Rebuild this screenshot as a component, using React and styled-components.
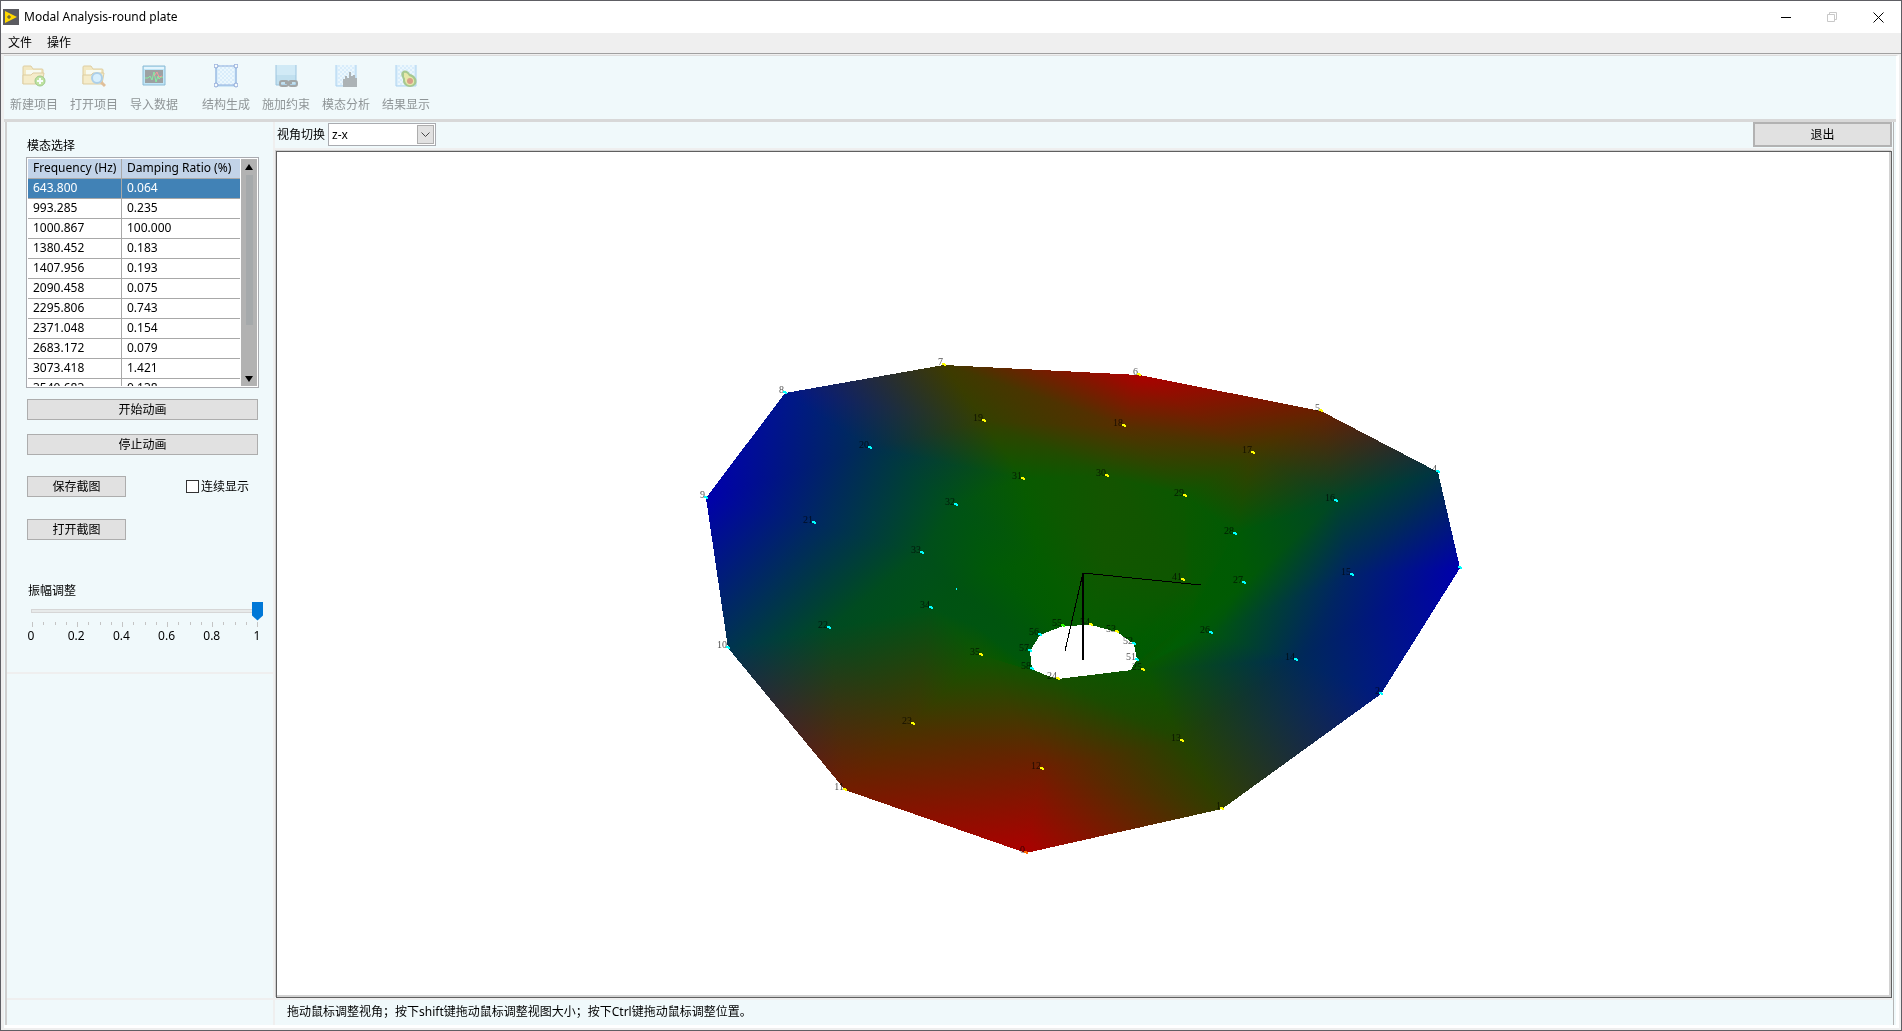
import { useState } from 'react';
import styled, { createGlobalStyle } from 'styled-components';

const GlobalStyle = createGlobalStyle`
  * {
    box-sizing: border-box;
  }
  body {
    margin: 0;
    font-family: 'Noto Sans', 'Noto Sans CJK SC', sans-serif;
    font-size: 12px;
    line-height: 16px;
    color: #000;
  }
  button, select, input {
    font: inherit;
    color: inherit;
  }
`;

// window frame
const Window = styled.div`
  height: 100vh;
  display: flex;
  flex-direction: column;
  border: 1px solid #5e5e64;
  background-color: #efefef;
`;
const TitleBar = styled.header`
  display: flex;
  align-items: center;
  height: 32px;
  padding-left: 2px;
  background-color: #fff;
`;
const Title = styled.h1`
  flex: 1;
  margin: 0 0 0 5px;
  font-size: 12px;
  font-weight: normal;
`;
const WindowButton = styled.button`
  display: flex;
  align-items: center;
  justify-content: center;
  width: 46px;
  height: 30px;
  padding: 0;
  border: none;
  background: none;
  color: ${(props) => (props.disabled ? '#c8c8c8' : '#000')};
`;
const MenuBar = styled.nav`
  display: flex;
  gap: 15px;
  height: 21px;
  padding-left: 7px;
  border-bottom: 1px solid #a0a0a0;
`;
const MenuItem = styled.button`
  padding: 0;
  border: none;
  background: none;
  line-height: 16px;
`;
const Client = styled.div`
  flex: 1;
  min-height: 0;
  display: flex;
  flex-direction: column;
  margin: 1px 2px 2px 3px;
  border-top: 1px solid #dcdcdc;
  border-right: 3px solid #fff;
  border-bottom: 3px solid #fff;
  background-color: #f0f9fb;
`;

// toolbar
const ToolBar = styled.div`
  display: flex;
  height: 66px;
  padding: 8px 0 0 6px;
  border-bottom: 3px solid #d8d8d8;
`;
const ToolButton = styled.button`
  display: flex;
  flex-direction: column;
  align-items: center;
  gap: 9px;
  width: 48px;
  margin-right: ${(props) => (props.$last ? '24px' : '12px')};
  padding: 0;
  border: none;
  background: none;
  color: #8f9597;
  svg {
    opacity: 0.5;
  }
`;

// main area
const Panels = styled.main`
  flex: 1;
  min-height: 0;
  display: flex;
  margin-left: 1px;
  border-left: 2px solid #d0d0d0;
`;
const SideColumn = styled.div`
  display: flex;
  flex-direction: column;
  width: 268px;
  border-right: 2px solid #efefef;
`;
const ControlPanel = styled.section`
  height: 552px;
  padding: 16px 9px 0 19px;
  border-bottom: 2px solid #efefef;
`;
const SideFiller = styled.div`
  flex: 1;
`;
const SideFooter = styled.div`
  height: 27px;
  border-top: 2px solid #efefef;
`;
const Caption = styled.div`
  padding-left: 1px;
`;

// mode list
const ListFrame = styled.div`
  display: flex;
  width: 233px;
  height: 231px;
  margin-top: 3px;
  padding: 1px;
  border: 1px solid #a9abb0;
  background-color: #fff;
`;
const ListClip = styled.div`
  flex: 1;
  overflow: hidden;
`;
const ModeTable = styled.table`
  width: 100%;
  table-layout: fixed;
  border-collapse: separate;
  border-spacing: 0;
  th, td {
    height: 20px;
    padding: 0 0 1px 5px;
    border-bottom: 1px solid #a8a8a8;
    line-height: 16px;
    text-align: left;
    font-weight: normal;
    white-space: nowrap;
  }
  th:first-child, td:first-child {
    width: 94px;
    border-right: 1px solid #a8a8a8;
  }
`;
const HeadRow = styled.tr`
  background-color: #c2d3e8;
`;
const ModeRow = styled.tr`
  background-color: ${(props) => (props.$selected ? '#4182b6' : '#fff')};
  color: ${(props) => (props.$selected ? '#fff' : '#000')};
`;
const ScrollBar = styled.div`
  display: flex;
  flex-direction: column;
  align-items: center;
  width: 16px;
  margin-left: 1px;
  background-color: #b2b2b2;
`;
const ScrollThumb = styled.div`
  width: 7px;
  height: 150px;
  margin-bottom: auto;
  background-color: #a5a9ab;
`;

// buttons and inputs of the side panel
const PushButton = styled.button`
  width: ${(props) => (props.$wide ? '231px' : '99px')};
  height: 21px;
  padding: 0;
  border: 1px solid #adadad;
  background-color: #e1e1e1;
  line-height: 16px;
`;
const Actions = styled.div`
  display: flex;
  flex-direction: column;
  align-items: flex-start;
  padding: 11px 0 0 1px;
`;
const ActionRow = styled.div`
  display: flex;
  align-items: center;
  width: 231px;
  margin-top: ${(props) => props.$top};
`;
const CheckLabel = styled.label`
  display: flex;
  align-items: center;
  gap: 2px;
  margin-left: 60px;
`;
const CheckBox = styled.input`
  appearance: none;
  width: 13px;
  height: 13px;
  margin: 0;
  border: 1px solid #333;
  background-color: #fff;
  &:checked {
    background-color: #0078d7;
  }
`;
const SliderBlock = styled.div`
  width: 237px;
  margin-top: 43px;
  padding-left: 1px;
`;
const SliderLabel = styled.label`
  display: block;
  padding-left: 1px;
`;
const Slider = styled.input`
  appearance: none;
  display: block;
  width: 100%;
  height: 20px;
  margin: 2px 0 0;
  background:
    linear-gradient(#e7eaea, #e7eaea) 5px 9px / calc(100% - 10px) 2px no-repeat,
    linear-gradient(#d6d6d6, #d6d6d6) 4px 8px / calc(100% - 8px) 4px no-repeat;
  &::-webkit-slider-thumb {
    appearance: none;
    width: 11px;
    height: 19px;
    background-color: #0078d7;
    clip-path: polygon(0 0, 100% 0, 100% 74%, 50% 100%, 0 74%);
  }
`;
const Ticks = styled.div`
  display: flex;
  justify-content: space-between;
  height: 6px;
  margin: 1px 5px 0;
`;
const Tick = styled.span`
  width: 1px;
  height: ${(props) => (props.$major ? '5px' : '3px')};
  background-color: #c4c4c4;
`;
const Scale = styled.div`
  display: flex;
  justify-content: space-between;
  margin: 0 -5px 0 -7px;
  span {
    width: 22px;
    text-align: center;
  }
`;

// view area
const ViewColumn = styled.div`
  flex: 1;
  min-width: 0;
  display: flex;
  flex-direction: column;
  margin-right: 2px;
  border-right: 1px solid #b4b4b4;
`;
const ViewBar = styled.div`
  display: flex;
  align-items: center;
  height: 29px;
  padding: 0 1px 1px 2px;
  border-bottom: 3px solid #efefef;
`;
const SelectWrap = styled.span`
  position: relative;
  width: 108px;
  height: 23px;
  margin-left: 3px;
`;
const ViewSelect = styled.select`
  appearance: none;
  width: 100%;
  height: 100%;
  padding: 0 20px 0 3px;
  border: 1px solid #a9abb0;
  border-radius: 0;
  background-color: #fff;
`;
const SelectArrow = styled.span`
  position: absolute;
  top: 2px;
  right: 2px;
  bottom: 2px;
  width: 17px;
  display: flex;
  align-items: center;
  justify-content: center;
  border: 1px solid #adadad;
  background-color: #e1e1e1;
  pointer-events: none;
`;
const ExitButton = styled.button`
  width: 139px;
  height: 25px;
  margin-left: auto;
  padding: 0;
  border: 2px solid #b2b2b2;
  background-color: #e1e1e1;
`;
const Viewport = styled.div`
  flex: 1;
  min-height: 0;
  margin: 0 1px;
  border: 1px solid #5f5f5f;
  box-shadow:
    -1px -1px 0 #cfcfcf,
    inset -2px -2px 0 #d2d2d2;
  background-color: #fff;
  svg {
    display: block;
    width: 100%;
    height: 100%;
  }
`;
const Mesh = styled.g`
  isolation: isolate;
  polygon {
    mix-blend-mode: lighten;
  }
`;
const StatusBar = styled.footer`
  height: 27px;
  padding: 4px 0 0 12px;
  border-top: 2px solid #efefef;
`;

const modes = [
  ['643.800', '0.064'],
  ['993.285', '0.235'],
  ['1000.867', '100.000'],
  ['1380.452', '0.183'],
  ['1407.956', '0.193'],
  ['2090.458', '0.075'],
  ['2295.806', '0.743'],
  ['2371.048', '0.154'],
  ['2683.172', '0.079'],
  ['3073.418', '1.421'],
  ['3540.683', '0.138'],
];

// plate nodes, twelve per ring, outer ring first: x, y, r, g, b
const nodes = [
  [1026, 853, 172, 0, 0],
  [1222, 809, 48, 62, 0],
  [1381, 694, 0, 25, 130],
  [1460, 568, 0, 0, 172],
  [1438, 472, 0, 52, 66],
  [1321, 411, 105, 32, 0],
  [1139, 375, 172, 0, 0],
  [944, 365, 62, 58, 0],
  [785, 393, 0, 22, 140],
  [706, 498, 0, 0, 172],
  [728, 648, 0, 52, 80],
  [845, 790, 115, 28, 0],

  [1042, 769, 112, 30, 0],
  [1182, 741, 35, 68, 0],
  [1296, 660, 0, 42, 86],
  [1352, 575, 0, 34, 106],
  [1336, 501, 0, 70, 38],
  [1253, 453, 62, 58, 0],
  [1124, 426, 88, 46, 0],
  [984, 421, 52, 64, 0],
  [870, 448, 0, 46, 82],
  [814, 523, 0, 40, 98],
  [829, 628, 0, 74, 34],
  [913, 724, 70, 52, 0],

  [1058, 679, 22, 80, 0],
  [1143, 670, 8, 86, 0],
  [1211, 633, 0, 86, 12],
  [1244, 583, 0, 90, 4],
  [1235, 534, 0, 90, 4],
  [1185, 496, 10, 88, 0],
  [1107, 476, 20, 84, 0],
  [1023, 479, 8, 90, 0],
  [956, 505, 0, 82, 22],
  [922, 553, 0, 78, 28],
  [931, 608, 0, 82, 20],
  [981, 655, 14, 86, 0],

  [1058, 679, 18, 82, 0],
  [1140, 669, 8, 86, 0],
  [1170, 650, 0, 92, 4],
  [1190, 620, 0, 92, 0],
  [1195, 595, 6, 90, 0],
  [1183, 580, 14, 86, 0],
  [1105, 560, 18, 86, 0],
  [1040, 560, 4, 92, 0],
  [995, 570, 0, 90, 6],
  [956, 589, 0, 82, 18],
  [975, 625, 0, 84, 16],
  [1010, 664, 6, 88, 0],

  [1058, 679, 18, 82, 0],
  [1129, 672, 8, 86, 0],
  [1130, 671, 8, 86, 0],
  [1137, 660, 0, 90, 2],
  [1134, 644, 0, 92, 0],
  [1117, 632, 4, 92, 0],
  [1091, 625, 6, 92, 0],
  [1063, 626, 2, 92, 0],
  [1040, 635, 0, 88, 8],
  [1030, 651, 0, 86, 12],
  [1032, 669, 0, 88, 8],
  [1045, 675, 8, 86, 0],
];

// each cell between two rings is cut into two triangles
const triangles = [];
for (let ring = 0; ring < 4; ring++) {
  for (let i = 0; i < 12; i++) {
    const a = nodes[ring * 12 + i];
    const b = nodes[ring * 12 + ((i + 1) % 12)];
    const c = nodes[(ring + 1) * 12 + ((i + 1) % 12)];
    const d = nodes[(ring + 1) * 12 + i];
    triangles.push([a, b, d], [b, c, d]);
  }
}

const YELLOW = '#ffff00';
const CYAN = '#00ffff';
const yellowNodes = [1, 5, 6, 7, 11, 12, 13, 17, 18, 19, 23, 24, 25, 29, 30, 31, 35, 41, 53, 54];
const hiddenNodes = [36, 37, 38, 39, 40, 42, 43, 44, 45, 46, 47, 48, 49, 50, 59];
const hiddenLabels = [3];

const markerColor = (index) => {
  if (index === 0) return '#ff6a00';
  if (index === 55) return '#2cff00';
  return yellowNodes.includes(index) ? YELLOW : CYAN;
};

// colour of one channel as a linear gradient over the triangle
const channelGradient = (points, channel) => {
  const [a, b, c] = points;
  const k = channel + 2;
  const det = (b[0] - a[0]) * (c[1] - a[1]) - (c[0] - a[0]) * (b[1] - a[1]);
  const values = points.map((p) => p[k]);
  const min = Math.min(...values);
  const max = Math.max(...values);
  if (det === 0 || max === 0) return null;
  if (min === max) return { min, max };
  const gx = ((b[k] - a[k]) * (c[1] - a[1]) - (c[k] - a[k]) * (b[1] - a[1])) / det;
  const gy = ((c[k] - a[k]) * (b[0] - a[0]) - (b[k] - a[k]) * (c[0] - a[0])) / det;
  const length = (max - min) / (gx * gx + gy * gy);
  const start = points.find((p) => p[k] === min);
  return {
    min,
    max,
    x1: start[0],
    y1: start[1],
    x2: start[0] + gx * length,
    y2: start[1] + gy * length,
  };
};

const channelColor = (channel, value) => {
  const rgb = [0, 0, 0];
  rgb[channel] = value;
  return `rgb(${rgb.join(',')})`;
};

function Triangle({ points, id }) {
  const shape = points.map((p) => `${p[0]},${p[1]}`).join(' ');
  return [0, 1, 2].map((channel) => {
    const g = channelGradient(points, channel);
    if (!g) return null;
    const key = `${id}-${channel}`;
    if (g.min === g.max) {
      return <polygon key={key} points={shape} fill={channelColor(channel, g.max)} />;
    }
    return [
      <linearGradient
        key={`${key}-fill`}
        id={key}
        gradientUnits="userSpaceOnUse"
        x1={g.x1}
        y1={g.y1}
        x2={g.x2}
        y2={g.y2}
      >
        <stop offset="0" stopColor={channelColor(channel, g.min)} />
        <stop offset="1" stopColor={channelColor(channel, g.max)} />
      </linearGradient>,
      <polygon key={key} points={shape} fill={`url(#${key})`} />,
    ];
  });
}

function Plate() {
  return (
    <svg viewBox="277 152 1614 845" role="img" aria-label="round plate">
      <Mesh shapeRendering="crispEdges">
        {triangles.map((points, index) => (
          <Triangle key={index} id={`t${index}`} points={points} />
        ))}
      </Mesh>
      <g fontFamily="'Liberation Serif', serif" fontSize="10" textAnchor="end" fillOpacity="0.7">
        {nodes.map(([x, y], index) =>
          hiddenNodes.includes(index) || hiddenLabels.includes(index) ? null : (
            <text key={index} x={x - 1} y={y}>
              {index}
            </text>
          )
        )}
      </g>
      <g shapeRendering="crispEdges">
        {nodes.map(([x, y], index) =>
          hiddenNodes.includes(index) ? null : (
            <path
              key={index}
              d={`M${x - 2} ${y - 2}h3v1h1v2h-2v-1h-2z`}
              fill={markerColor(index)}
            />
          )
        )}
        <path d="M956 588h1v2h-1z" fill={CYAN} />
      </g>
      <g fill="none" stroke="#000" shapeRendering="crispEdges">
        <path d="M1083 573L1201 585" />
        <path d="M1083 573V660" strokeWidth="2" />
        <path d="M1083 573L1065 651" />
      </g>
    </svg>
  );
}

function Folder() {
  return (
    <>
      <path d="M1 20V3q0-1 1-1h7l2 3h9q1 0 1 1v4" fill="#f5d98a" stroke="#cda349" />
      <path d="M4 6h15v5H4z" fill="#fffbe8" />
      <path d="M1 20V11h8l2-2h11l-2 11z" fill="#fbe09a" stroke="#cda349" />
    </>
  );
}

function Grid() {
  return (
    <>
      <path d="M2 1h20v21H2z" fill="#c4e2fb" />
      <path
        d="M4 4h16M4 8h16M4 12h16M4 16h16M4 20h16"
        stroke="#e8f6ff"
        strokeWidth="2"
        strokeDasharray="2 2"
      />
      <path
        d="M6 2h16M6 6h16M6 10h16M6 14h16M6 18h16"
        stroke="#e8f6ff"
        strokeWidth="2"
        strokeDasharray="2 2"
      />
      <path d="M2 1v21h20V1" fill="none" stroke="#6aaee6" />
    </>
  );
}

const drawings = {
  create: (
    <>
      <Folder />
      <circle cx="18" cy="17" r="5" fill="#8fcf4a" stroke="#4f9a1e" />
      <path d="M18 14v6M15 17h6" stroke="#fff" strokeWidth="2" />
    </>
  ),
  open: (
    <>
      <Folder />
      <path d="M19 18l4 4" stroke="#d2863a" strokeWidth="3" />
      <circle cx="15" cy="14" r="5" fill="#c0e6ff" stroke="#6aa7d8" strokeWidth="2" />
    </>
  ),
  load: (
    <>
      <path d="M1 2h22v19H1z" fill="#8fd2f3" stroke="#2b7eb0" />
      <path d="M2 3h20v2H2z" fill="#d9f2ff" />
      <path d="M3 6h18v13H3z" fill="#4c4c4c" />
      <path d="M3 14h3l2-2 2 4 2-8 2 10 2-6 1 3 2-2h2" fill="none" stroke="#21e04e" />
      <path d="M12 12l3-4 2 5 3-1" fill="none" stroke="#ff4040" />
    </>
  ),
  structure: (
    <>
      <Grid />
      <path d="M2 2h20v19H2z" fill="none" stroke="#3468c0" />
      <g fill="#fff" stroke="#2d57b4">
        <circle cx="2" cy="2" r="2" />
        <circle cx="22" cy="2" r="2" />
        <circle cx="2" cy="21" r="2" />
        <circle cx="22" cy="21" r="2" />
      </g>
    </>
  ),
  constraint: (
    <>
      <path d="M2 1h20v20H2z" fill="#b4dcf3" />
      <path d="M2 11h20v10H2z" fill="#93c8e4" />
      <path d="M2 1v20h20V1" fill="none" stroke="#4b92c4" />
      <g fill="none" stroke="#555" strokeWidth="2">
        <rect x="6" y="17" width="8" height="5" rx="2" />
        <rect x="15" y="17" width="8" height="5" rx="2" />
        <path d="M11 19h7" />
      </g>
    </>
  ),
  analysis: (
    <>
      <Grid />
      <path d="M9 23V15h2v-3h2v2h2V8h2v4h2v-1h2v3h2v9z" fill="#6a6f73" />
    </>
  ),
  result: (
    <>
      <Grid />
      <path d="M8 8c3-3 6-1 8 2 5 1 8 6 6 10-3 4-9 4-12 0-2-3 0-4-2-7-1-2-1-4 0-5z" fill="#5f9a2a" />
      <path d="M10 9c2-1 4 1 5 3 4 1 6 4 5 7-2 3-6 3-8 0-2-3 0-4-2-6z" fill="#ddd95a" />
      <circle cx="16" cy="17" r="3" fill="#c3491b" />
    </>
  ),
};

const tools = [
  { label: '新建项目', icon: 'create' },
  { label: '打开项目', icon: 'open' },
  { label: '导入数据', icon: 'load', last: true },
  { label: '结构生成', icon: 'structure' },
  { label: '施加约束', icon: 'constraint' },
  { label: '模态分析', icon: 'analysis' },
  { label: '结果显示', icon: 'result' },
];

const scale = ['0', '0.2', '0.4', '0.6', '0.8', '1'];

function App() {
  const [selected, setSelected] = useState(0);
  const [amplitude, setAmplitude] = useState(1);

  return (
    <Window>
      <GlobalStyle />
      <TitleBar>
        <svg width="16" height="16" viewBox="0 0 16 16" aria-hidden="true">
          <path d="M0 0h16v16H0z" fill="#5b5b60" />
          <path d="M2 2l12 6-12 6z" fill="#ffd800" />
          <path d="M4 8h4M6 6v4" stroke="#4a4a4a" />
        </svg>
        <Title>Modal Analysis-round plate</Title>
        <WindowButton aria-label="minimize">
          <svg width="10" height="10" viewBox="0 0 10 10">
            <path d="M0 5.5h10" stroke="currentColor" />
          </svg>
        </WindowButton>
        <WindowButton aria-label="restore" disabled>
          <svg width="10" height="10" viewBox="0 0 10 10" fill="none" stroke="currentColor">
            <path d="M.5 2.5h7v7h-7zM2.5 2.5v-2h7v7h-2" />
          </svg>
        </WindowButton>
        <WindowButton aria-label="close">
          <svg width="11" height="11" viewBox="0 0 11 11">
            <path d="M.5.5l10 10M10.5.5l-10 10" stroke="currentColor" />
          </svg>
        </WindowButton>
      </TitleBar>
      <MenuBar>
        <MenuItem>文件</MenuItem>
        <MenuItem>操作</MenuItem>
      </MenuBar>
      <Client>
        <ToolBar>
          {tools.map((tool) => (
            <ToolButton key={tool.icon} $last={tool.last} disabled>
              <svg width="24" height="24" viewBox="0 0 24 24" aria-hidden="true">
                {drawings[tool.icon]}
              </svg>
              {tool.label}
            </ToolButton>
          ))}
        </ToolBar>
        <Panels>
          <SideColumn>
            <ControlPanel>
              <Caption>模态选择</Caption>
              <ListFrame>
                <ListClip>
                  <ModeTable>
                    <thead>
                      <HeadRow>
                        <th>Frequency (Hz)</th>
                        <th>Damping Ratio (%)</th>
                      </HeadRow>
                    </thead>
                    <tbody>
                      {modes.map(([frequency, damping], index) => (
                        <ModeRow
                          key={frequency}
                          $selected={index === selected}
                          onClick={() => setSelected(index)}
                        >
                          <td>{frequency}</td>
                          <td>{damping}</td>
                        </ModeRow>
                      ))}
                    </tbody>
                  </ModeTable>
                </ListClip>
                <ScrollBar>
                  <svg width="8" height="16" viewBox="0 0 8 16">
                    <path d="M4 5l4 6H0z" />
                  </svg>
                  <ScrollThumb />
                  <svg width="8" height="13" viewBox="0 0 8 13">
                    <path d="M0 3h8l-4 6z" />
                  </svg>
                </ScrollBar>
              </ListFrame>
              <Actions>
                <PushButton $wide>开始动画</PushButton>
                <ActionRow $top="14px">
                  <PushButton $wide>停止动画</PushButton>
                </ActionRow>
                <ActionRow $top="21px">
                  <PushButton>保存截图</PushButton>
                  <CheckLabel>
                    <CheckBox type="checkbox" />
                    连续显示
                  </CheckLabel>
                </ActionRow>
                <ActionRow $top="22px">
                  <PushButton>打开截图</PushButton>
                </ActionRow>
              </Actions>
              <SliderBlock>
                <SliderLabel htmlFor="amplitude">振幅调整</SliderLabel>
                <Slider
                  id="amplitude"
                  type="range"
                  min="0"
                  max="1"
                  step="0.01"
                  value={amplitude}
                  onChange={(e) => setAmplitude(e.target.value)}
                />
                <Ticks>
                  {Array.from({ length: 21 }, (_, index) => (
                    <Tick key={index} $major={index % 4 === 0} />
                  ))}
                </Ticks>
                <Scale>
                  {scale.map((value) => (
                    <span key={value}>{value}</span>
                  ))}
                </Scale>
              </SliderBlock>
            </ControlPanel>
            <SideFiller />
            <SideFooter />
          </SideColumn>
          <ViewColumn>
            <ViewBar>
              <label htmlFor="view">视角切换</label>
              <SelectWrap>
                <ViewSelect id="view" defaultValue="z-x">
                  <option>x-y</option>
                  <option>y-z</option>
                  <option>z-x</option>
                </ViewSelect>
                <SelectArrow>
                  <svg width="9" height="6" viewBox="0 0 9 6" fill="none" stroke="#444">
                    <path d="M.5.5l4 4 4-4" />
                  </svg>
                </SelectArrow>
              </SelectWrap>
              <ExitButton>退出</ExitButton>
            </ViewBar>
            <Viewport>
              <Plate />
            </Viewport>
            <StatusBar>
              拖动鼠标调整视角；按下shift键拖动鼠标调整视图大小；按下Ctrl键拖动鼠标调整位置。
            </StatusBar>
          </ViewColumn>
        </Panels>
      </Client>
    </Window>
  );
}

export default App;
